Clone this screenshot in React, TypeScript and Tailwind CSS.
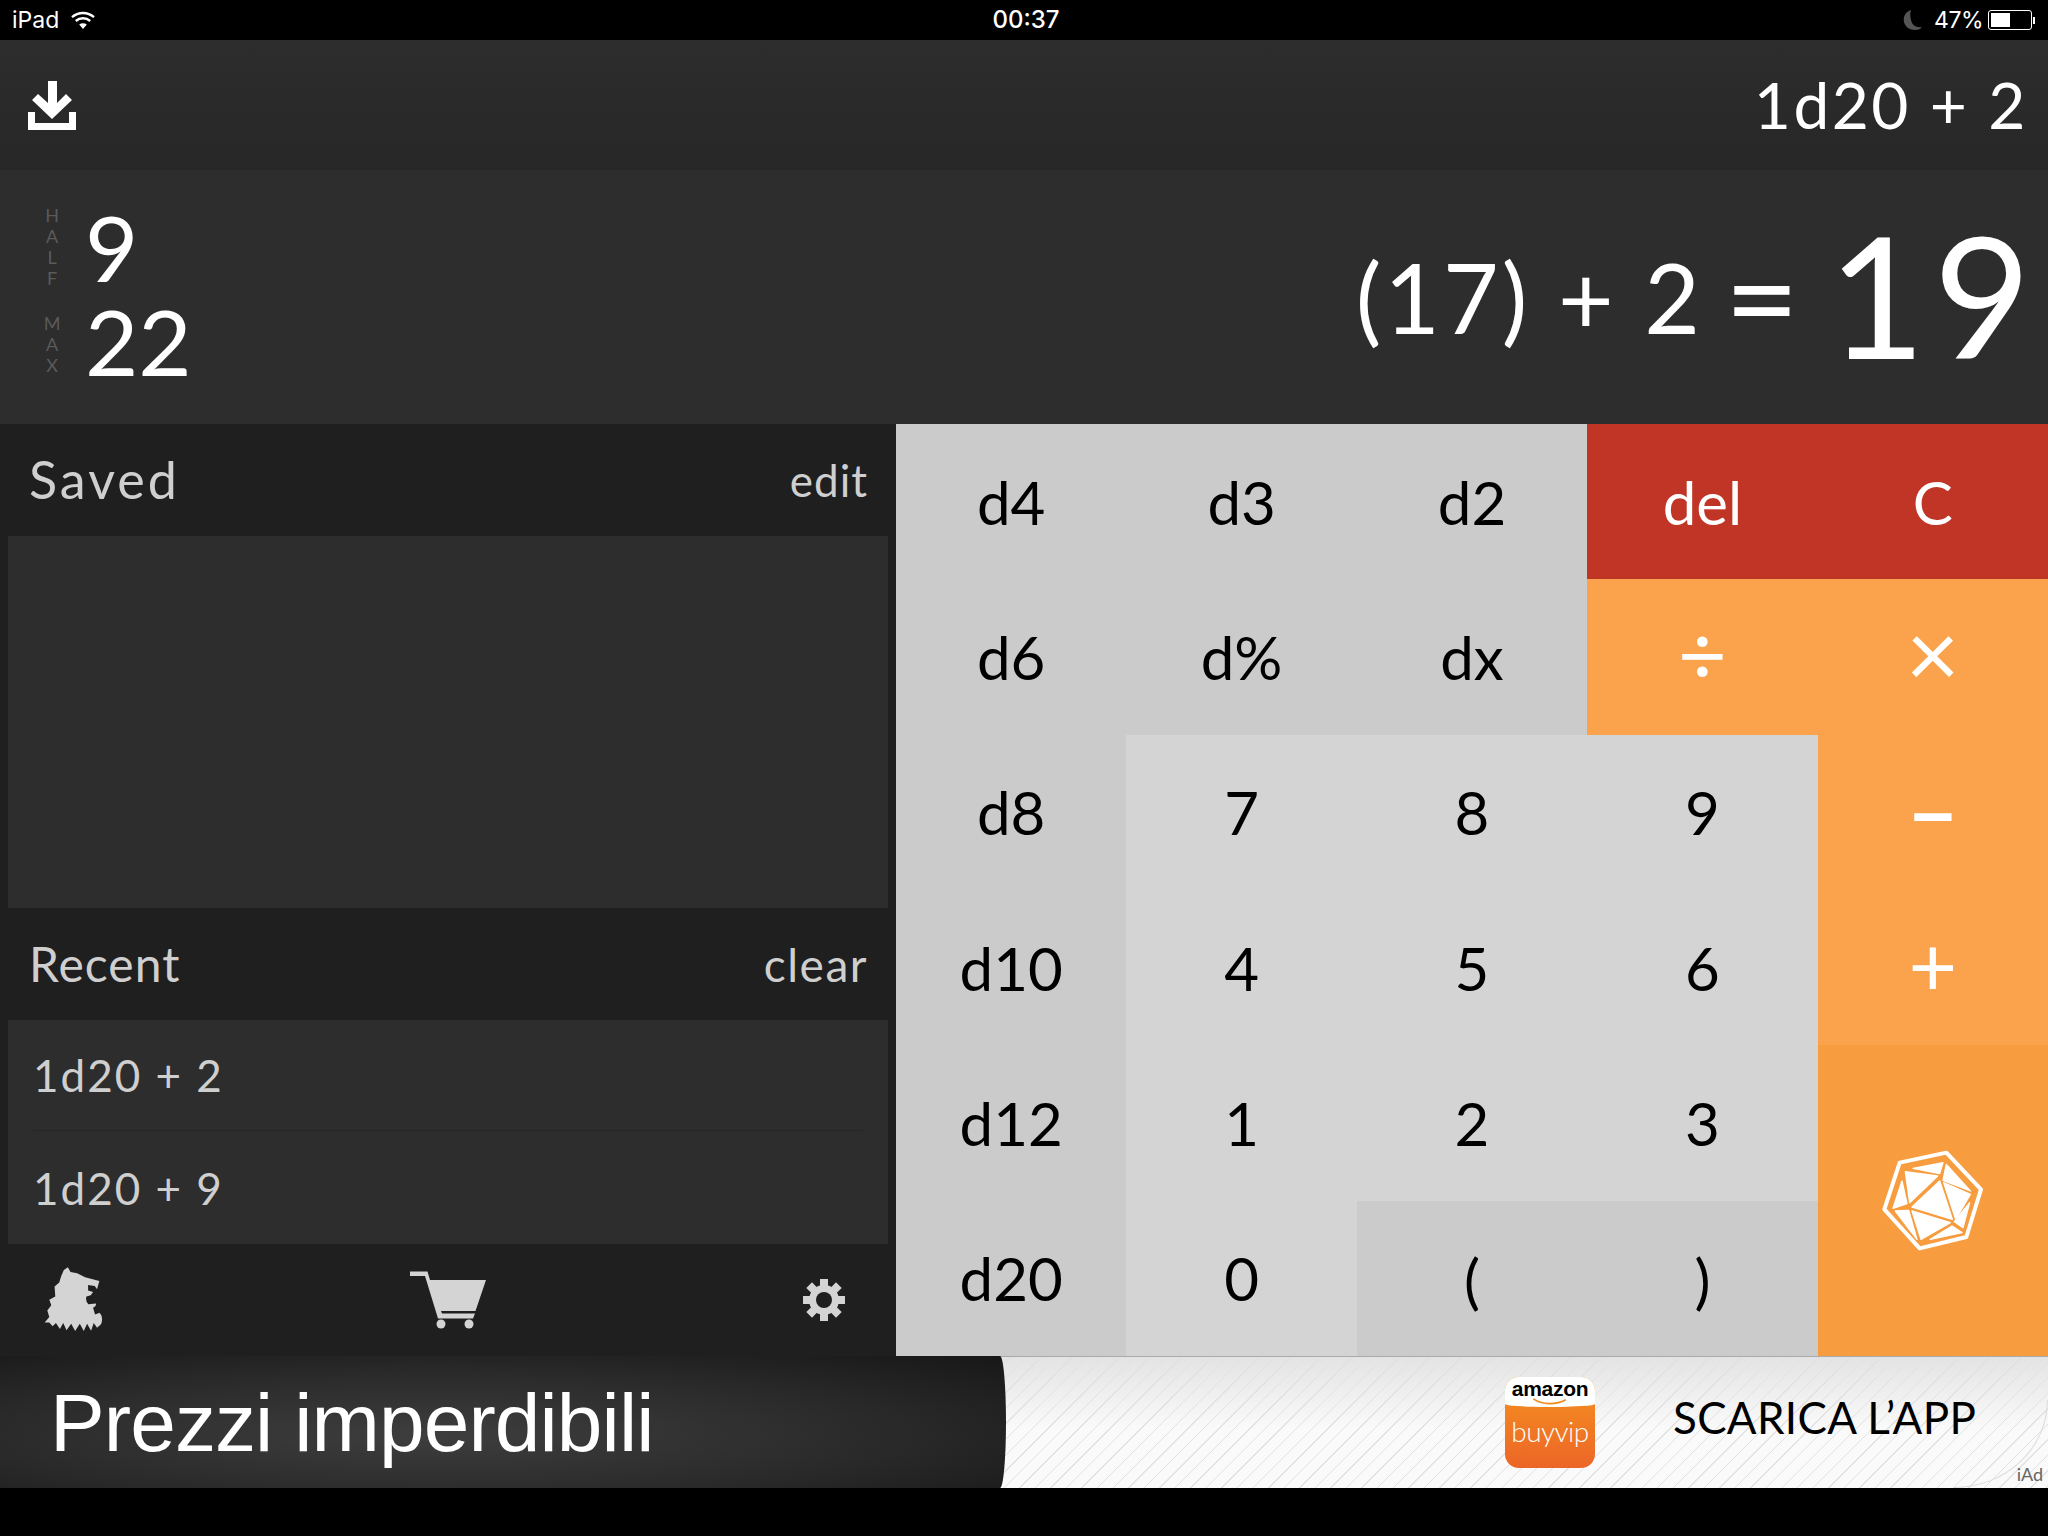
const keys = [
  { label: "d4", cls: "bg-[#cbcbcb] text-black" },
  { label: "d3", cls: "bg-[#cbcbcb] text-black" },
  { label: "d2", cls: "bg-[#cbcbcb] text-black" },
  { label: "del", cls: "bg-[#c13526] text-white" },
  { label: "C", cls: "bg-[#c13526] text-white" },
  { label: "d6", cls: "bg-[#cbcbcb] text-black" },
  { label: "d%", cls: "bg-[#cbcbcb] text-black" },
  { label: "dx", cls: "bg-[#cbcbcb] text-black" },
  { label: "÷", cls: "bg-[#faa34c] text-white text-[84px] pb-[8px]" },
  { label: "×", cls: "bg-[#faa34c] text-white text-[92px] pb-[10px]" },
  { label: "d8", cls: "bg-[#cbcbcb] text-black" },
  { label: "7", cls: "bg-[#d4d4d4] text-black" },
  { label: "8", cls: "bg-[#d4d4d4] text-black" },
  { label: "9", cls: "bg-[#d4d4d4] text-black" },
  { label: "−", cls: "bg-[#faa34c] text-white text-[84px] font-bold pt-[2px]" },
  { label: "d10", cls: "bg-[#cbcbcb] text-black" },
  { label: "4", cls: "bg-[#d4d4d4] text-black" },
  { label: "5", cls: "bg-[#d4d4d4] text-black" },
  { label: "6", cls: "bg-[#d4d4d4] text-black" },
  { label: "+", cls: "bg-[#faa34c] text-white text-[84px] pb-[8px]" },
  { label: "d12", cls: "bg-[#cbcbcb] text-black" },
  { label: "1", cls: "bg-[#d4d4d4] text-black" },
  { label: "2", cls: "bg-[#d4d4d4] text-black" },
  { label: "3", cls: "bg-[#d4d4d4] text-black" },
  { label: "roll", cls: "bg-[#f89d3f] text-white row-span-2" },
  { label: "d20", cls: "bg-[#cbcbcb] text-black" },
  { label: "0", cls: "bg-[#d4d4d4] text-black" },
  { label: "(", cls: "bg-[#cbcbcb] text-black pt-[4px]" },
  { label: ")", cls: "bg-[#cbcbcb] text-black pt-[4px]" },
];

function Wifi() {
  return (
    <svg viewBox="0 0 24 18" className="w-6 h-[18px]" fill="none" stroke="white" strokeWidth="2.4">
      <path d="M1 6.2C7.2.6 16.8.6 23 6.2" />
      <path d="M4.8 10C8.9 6.4 15.1 6.4 19.2 10" />
      <path d="M12 18l-3.8-4.4c2.2-1.7 5.4-1.700 7.6 0z" fill="white" stroke="none" />
    </svg>
  );
}

function Download() {
  return (
    <svg viewBox="0 0 48 49" className="w-12 h-[49px]" fill="white">
      <path d="M20 0h9v22l9-9 6 6-20 19L4 19l6-6 10 9z" />
      <path d="M0 31h7v11h34V31h7v18H0z" />
    </svg>
  );
}

function Lion() {
  return (
    <svg viewBox="60 50 190 205" className="w-[63px] h-[68px]" fill="#d4d4d4">
      <path
        fillRule="evenodd"
        d="M126 62L138 54L146 68L166 72L190 84L233 95L226 120L219 110L199 107L199 124L214 128L207 138L194 142Q190 155 200 165L222 163Q226 170 214 176L220 196L234 191Q246 205 238 226L226 236L216 222L208 245L196 224L186 246L174 224L160 246L148 224L134 244L124 222L114 240L102 222L92 232L82 220L68 220L82 204L76 184L88 168L82 152L100 142L98 112L112 100L118 80Z"
      />
      <path d="M198 146Q212 140 220 152L212 157L202 155Z" fill="#1f1f1f" />
    </svg>
  );
}

function Cart() {
  return (
    <svg viewBox="10 10 78 60" className="w-[78px] h-[60px] -ml-[9px]" fill="#d4d4d4">
      <path d="M10 11.500H27.500L30 20H86L75.500 51H41L42 53.500H75L73 58.500H38L25 16H10Z" />
      <circle cx="41" cy="64" r="4.500" />
      <circle cx="69" cy="64" r="4.500" />
    </svg>
  );
}

function Gear() {
  return (
    <svg viewBox="0 0 44 44" className="w-[44px] h-[44px]" fill="#d4d4d4">
      {[0, 45, 90, 135, 180, 225, 270, 315].map((deg) => (
        <rect key={deg} x="18" y="1" width="8" height="10" transform={`rotate(${deg} 22 22)`} />
      ))}
      <circle cx="22" cy="22" r="15" />
      <circle cx="22" cy="22" r="8" fill="#1f1f1f" />
    </svg>
  );
}

function D20() {
  return (
    <svg viewBox="8 0 420 420" className="w-[140px] h-[140px]">
      <polygon points="118,95 258,65 362,175 318,318 178,352 72,235" fill="none" stroke="white" strokeWidth="12" strokeLinejoin="round" />
      <g fill="white" stroke="white" strokeWidth="4" strokeLinejoin="round">
        <polygon points="158,112 248,95 238,128" />
        <polygon points="258,100 330,180 248,148" />
        <polygon points="135,122 232,135 148,215" />
        <polygon points="238,150 276,265 155,228" />
        <polygon points="250,155 330,190 286,265" />
        <polygon points="328,215 308,290 282,272" />
        <polygon points="155,240 270,275 182,325" />
        <polygon points="275,285 305,305 210,325" />
        <polygon points="125,150 140,218 98,232" />
        <polygon points="105,240 145,238 170,325" />
      </g>
    </svg>
  );
}

function StatusBar() {
  return (
    <div className="h-10 bg-black text-white flex items-center justify-between pl-[12px] pr-[13px] font-['Inter',sans-serif] text-[23px]">
      <div className="flex items-center gap-[12px] w-[300px]">
        <span>iPad</span>
        <Wifi />
      </div>
      <span className="font-medium text-[24px] ml-[5px]">00:37</span>
      <div className="flex items-center justify-end w-[300px]">
        <svg viewBox="0 0 20 20" className="w-5 h-5 mr-[11px]" fill="#555">
          <path d="M8 0C2 2 0 7 1 12c1 5 6 8 11 8 3 0 6-1 7-3-6 1-10-2-11-7C7 6 7 3 8 0z" />
        </svg>
        <span className="mr-[5px] tracking-[-0.5px]">47%</span>
        <div className="w-[44px] h-[20px] border border-white rounded-[3px] p-[2px]">
          <div className="w-[19px] h-full bg-white" />
        </div>
        <div className="w-[2px] h-[7px] bg-white ml-[1px]" />
      </div>
    </div>
  );
}

function Display() {
  return (
    <>
      <div className="h-[130px] bg-gradient-to-b from-[#2d2d2d] to-[#272727] flex items-center justify-between pl-[28px] pr-[20px] text-white">
        <Download />
        <span className="text-[64px] tracking-[2.5px] leading-none">1d20 + 2</span>
      </div>
      <div className="h-[254px] bg-[#2d2d2d] flex items-center justify-between pl-[45px] pr-[9px] text-white">
        <div className="flex flex-col gap-[10px] mb-[6px]">
          <div className="flex items-center gap-[26px] h-[84px]">
            <div className="w-[14px] flex flex-col items-center text-[18px] leading-[21px] text-[#5a5a5a]">
              <span>H</span><span>A</span><span>L</span><span>F</span>
            </div>
            <span className="text-[92px] leading-[84px]">9</span>
          </div>
          <div className="flex items-center gap-[26px] h-[84px]">
            <div className="w-[14px] flex flex-col items-center text-[18px] leading-[21px] text-[#5a5a5a] mt-[6px]">
              <span>M</span><span>A</span><span>X</span>
            </div>
            <span className="text-[92px] leading-[84px]">22</span>
          </div>
        </div>
        <div className="flex items-center">
          <span className="text-[96px] tracking-[3px] leading-none mr-[26px] flex items-center">
            (17) + 2 <span className="text-[128px] leading-none ml-[22px] -mt-[4px]">=</span>
          </span>
          <span className="text-[168px] tracking-[8px] leading-none -mt-[6px]">19</span>
        </div>
      </div>
    </>
  );
}

function SidePanel() {
  return (
    <div className="w-[896px] bg-[#1f1f1f] flex flex-col">
      <div className="h-[112px] flex items-center justify-between pl-[29px] pr-[28px]">
        <span className="text-[52px] tracking-[3px] text-[#cfcfcf] -mt-[2px]">Saved</span>
        <span className="text-[44px] tracking-[1px] text-[#cfcfcf]">edit</span>
      </div>
      <div className="mx-2 h-[372px] bg-[#2d2d2d]" />
      <div className="h-[112px] flex items-center justify-between pl-[29px] pr-[28px]">
        <span className="text-[48px] tracking-[1px] text-[#cfcfcf]">Recent</span>
        <span className="text-[46px] tracking-[1.5px] text-[#cfcfcf]">clear</span>
      </div>
      <div className="mx-2 h-[224px] bg-[#2d2d2d] flex flex-col text-[#cfcfcf] text-[44px] tracking-[2px]">
        <div className="h-[111px] mx-[25px] flex items-center border-b border-[#262626]">1d20 + 2</div>
        <div className="flex-1 flex items-center pl-[25px]">1d20 + 9</div>
      </div>
      <div className="flex-1 flex items-center justify-between pl-[42px] pr-[50px]">
        <Lion />
        <Cart />
        <Gear />
      </div>
    </div>
  );
}

function Keypad() {
  return (
    <div className="flex-1 grid grid-cols-5 grid-rows-6 text-[60px]">
      {keys.map((k) => (
        <div key={k.label} className={`flex items-center justify-center ${k.cls}`}>
          {k.label === "roll" ? <D20 /> : k.label}
        </div>
      ))}
    </div>
  );
}

function Ad() {
  return (
    <div className="h-[132px] relative flex">
      <div className="w-[1006px] h-full bg-[radial-gradient(ellipse_at_43%_60%,#3e3e3e_0%,#2a2a2a_55%,#171717_100%)] flex items-center pl-[50px] rounded-r-[6px_66px] z-10">
        <span className="text-white text-[82px] font-['Liberation_Sans',sans-serif] tracking-[-0.9px] leading-none mt-[2px]">Prezzi imperdibili</span>
      </div>
      <div className="absolute inset-0 border-t border-[#aaa] bg-[linear-gradient(180deg,rgba(225,225,225,0.9)_0%,rgba(250,250,250,0.2)_55%),repeating-linear-gradient(135deg,#fafafa_0px,#fafafa_10px,#dcdcdc_10px,#dcdcdc_11px)]" />
      <div className="absolute right-0 bottom-0 w-[94px] h-[88px] rounded-br-[94px_88px] border-r border-b border-[#dcdcdc]" />
      <div className="absolute left-[1505px] top-[21px] w-[90px] h-[91px] rounded-[14px] overflow-hidden flex flex-col bg-gradient-to-b from-[#f5921e] to-[#ec6527]">
        <div className="h-[30px] pt-[2px] bg-white rounded-b-[50%_3px] flex flex-col items-center text-black font-bold font-['Liberation_Sans',sans-serif] text-[21px] leading-[19px] tracking-[-0.3px]">
          amazon
          <svg viewBox="0 0 40 8" className="w-[40px] h-[7px] shrink-0" fill="none" stroke="#f08a1d" strokeWidth="2">
            <path d="M1 1c10 7 26 7 37 1" />
          </svg>
        </div>
        <span className="text-white font-light text-[28px] leading-none text-center mt-[10px] tracking-[-0.5px]">buyvip</span>
      </div>
      <span className="absolute left-[1673px] top-[31px] text-[44px] leading-[60px] text-black tracking-[0.3px]">SCARICA L’APP</span>
      <span className="absolute right-[5px] bottom-0 text-[18px] text-[#666]">iAd</span>
    </div>
  );
}

export default function App() {
  return (
    <div className="w-[2048px] h-[1536px] bg-black font-['Lato',sans-serif] overflow-hidden">
      <StatusBar />
      <Display />
      <div className="flex h-[932px]">
        <SidePanel />
        <Keypad />
      </div>
      <Ad />
    </div>
  );
}
